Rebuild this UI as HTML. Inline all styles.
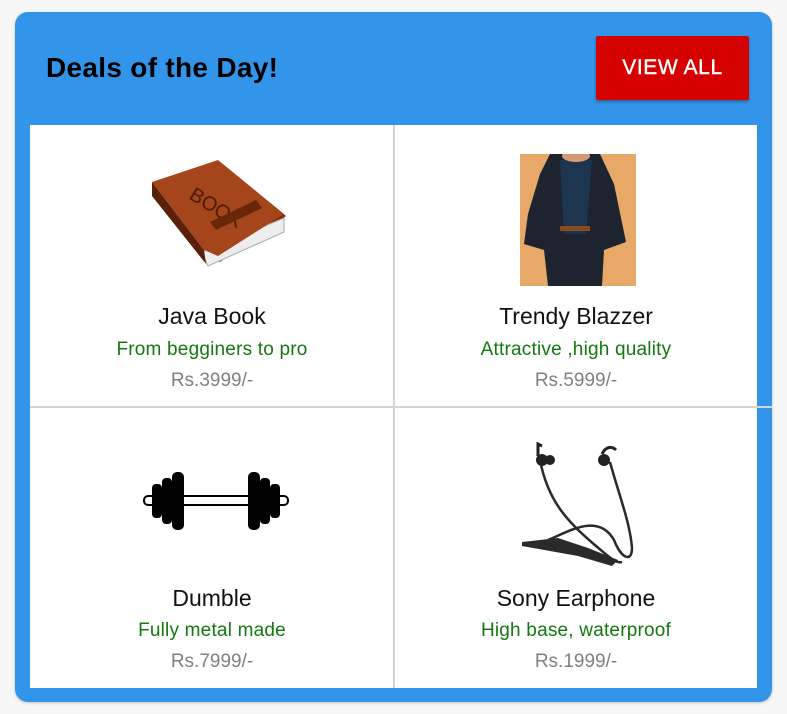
<!DOCTYPE html>
<html><head><meta charset="utf-8"><style>
body{margin:0;width:787px;height:714px;background:#f7f7f7;font-family:"Liberation Sans",Roboto,sans-serif;position:relative;overflow:hidden}
.card{position:absolute;left:15px;top:12px;width:757px;height:690px;background:#3395ea;border-radius:13px;box-shadow:0 1px 3px rgba(0,0,0,.2)}
h1{position:absolute;left:46px;top:52px;margin:0;font-size:28px;font-weight:bold;color:#000;letter-spacing:0.3px}
.btn{position:absolute;left:596px;top:36px;width:153px;height:64px;background:#d50000;color:#fff;font-size:21px;letter-spacing:0.6px;display:flex;align-items:center;justify-content:center;border-radius:2px;box-shadow:0 2px 3px rgba(0,0,0,.3);-webkit-text-stroke:0.4px #fff}
.grid{position:absolute;left:30px;top:125px;width:727px;height:563px;background:#fff}
.vl{position:absolute;left:393px;top:125px;width:2px;height:563px;background:#d4d4d4}
.hl{position:absolute;left:30px;top:406px;width:742px;height:2px;background:#d4d4d4}
.t{position:absolute;width:300px;text-align:center;white-space:nowrap}
.n{font-size:23px;color:#111}
.d{font-size:19px;color:#13780f;letter-spacing:0.2px}
.p{font-size:19px;color:#808080}
</style></head><body>
<div class="card"></div>
<h1>Deals of the Day!</h1>
<div class="btn">VIEW ALL</div>
<div class="grid"></div>
<div class="vl"></div><div class="hl"></div>

<svg style="position:absolute;left:148px;top:160px" width="142" height="112" viewBox="0 0 142 112">
<path d="M6 24 L72 2 L138 56 L72 102 Z" fill="#7a2e0c"/>
<path d="M54 92 L136 58 L136 72 L60 106 Z" fill="#eee" stroke="#aaa"/>
<path d="M4 22 L70 0 L136 54 L70 96 L56 90 Z" fill="#a4451b"/>
<path d="M4 22 L56 90 L58 104 L4 36 Z" fill="#5a200a"/>
<text x="40" y="38" font-size="20" fill="#4a1a06" transform="rotate(32 40 38)" font-family="Liberation Sans">BOOK</text>
<path d="M62 62 L108 40 L114 48 L68 70 Z" fill="#6a2608"/>
</svg>

<svg style="position:absolute;left:520px;top:154px" width="116" height="132" viewBox="0 0 116 132">
<rect width="116" height="132" fill="#e7a868"/>
<path d="M30 0 L20 20 L8 60 L4 90 L24 96 L28 132 L82 132 L84 96 L106 88 L94 30 L80 0 Z" fill="#1d2430"/>
<path d="M40 6 L44 80 L66 80 L72 6 Z" fill="#1e3550"/>
<rect x="40" y="72" width="30" height="5" fill="#8a4a20"/>
<ellipse cx="56" cy="2" rx="14" ry="6" fill="#d79a74"/>
</svg>

<svg style="position:absolute;left:142px;top:466px" width="148" height="70" viewBox="0 0 148 70">
<rect x="2" y="30" width="144" height="9" rx="4" fill="#fff" stroke="#000" stroke-width="2"/>
<rect x="10" y="18" width="10" height="34" rx="4"/><rect x="20" y="12" width="10" height="46" rx="4"/><rect x="30" y="6" width="12" height="58" rx="5"/>
<rect x="106" y="6" width="12" height="58" rx="5"/><rect x="118" y="12" width="10" height="46" rx="4"/><rect x="128" y="18" width="10" height="34" rx="4"/>
</svg>

<svg style="position:absolute;left:518px;top:442px" width="122" height="126" viewBox="0 0 122 126">
<g fill="none" stroke="#2a2a2a" stroke-width="2.5">
<path d="M22 18 C30 60 50 80 78 104 C90 114 98 122 104 120"/>
<path d="M92 20 C100 50 112 80 114 106 C114 120 104 118 96 98 C80 70 50 90 30 98"/>
</g>
<path d="M4 100 L40 96 L70 106 L100 118 L94 124 L60 114 L4 104 Z" fill="#2a2a2a"/>
<circle cx="24" cy="18" r="6" fill="#222"/><circle cx="32" cy="18" r="5" fill="#222"/>
<circle cx="86" cy="18" r="6" fill="#222"/>
<path d="M20 14 L20 2 L24 4" stroke="#222" stroke-width="3" fill="none"/>
<path d="M84 12 C88 4 94 4 98 8" stroke="#222" stroke-width="3" fill="none"/>
</svg>

<div class="t n" style="left:62px;top:303px">Java Book</div>
<div class="t d" style="left:62px;top:339px">From begginers to pro</div>
<div class="t p" style="left:62px;top:370px">Rs.3999/-</div>
<div class="t n" style="left:426px;top:303px">Trendy Blazzer</div>
<div class="t d" style="left:426px;top:339px">Attractive ,high quality</div>
<div class="t p" style="left:426px;top:370px">Rs.5999/-</div>
<div class="t n" style="left:62px;top:585px">Dumble</div>
<div class="t d" style="left:62px;top:620px">Fully metal made</div>
<div class="t p" style="left:62px;top:651px">Rs.7999/-</div>
<div class="t n" style="left:426px;top:585px">Sony Earphone</div>
<div class="t d" style="left:426px;top:620px">High base, waterproof</div>
<div class="t p" style="left:426px;top:651px">Rs.1999/-</div>
</body></html>
